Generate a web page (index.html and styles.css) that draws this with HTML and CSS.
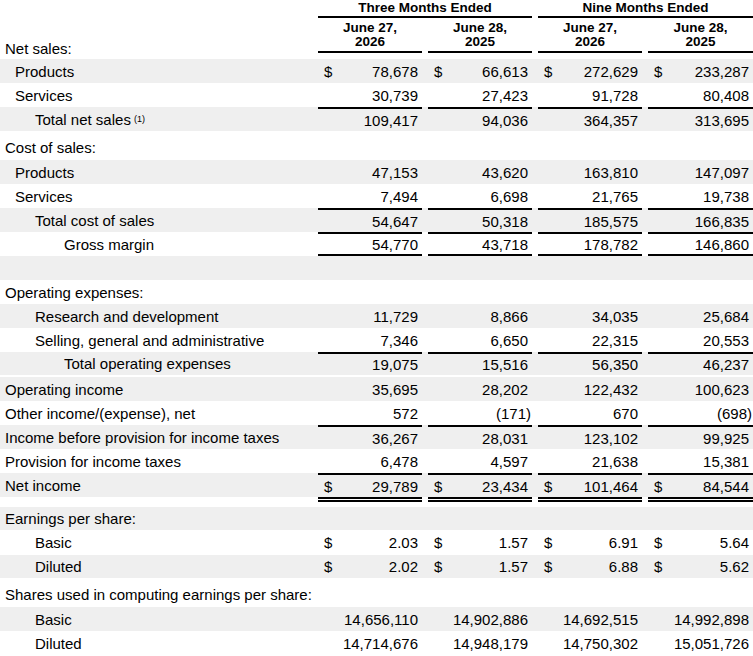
FILE: index.html
```html
<!DOCTYPE html>
<html lang="en">
<head>
    <meta charset="UTF-8">
    <meta name="viewport" content="width=device-width, initial-scale=1.0">
    <title>Condensed Consolidated Statements of Operations</title>
    <link rel="stylesheet" href="styles.css">
</head>
<body>
    <div class="statement">
        <div class="head-groups">
            <div></div>
            <div class="group">Three Months Ended</div>
            <div class="group">Nine Months Ended</div>
        </div>
        <div class="head-dates">
            <div class="label">Net sales:</div>
            <div class="date">June 27,<br>2026</div>
            <div class="date">June 28,<br>2025</div>
            <div class="date">June 27,<br>2026</div>
            <div class="date">June 28,<br>2025</div>
        </div>

        <div class="row shade">
            <div class="label lvl1">Products</div>
            <div class="num"><span class="cur">$</span>78,678</div>
            <div class="num"><span class="cur">$</span>66,613</div>
            <div class="num"><span class="cur">$</span>272,629</div>
            <div class="num"><span class="cur">$</span>233,287</div>
        </div>
        <div class="row">
            <div class="label lvl1">Services</div>
            <div class="num">30,739</div>
            <div class="num">27,423</div>
            <div class="num">91,728</div>
            <div class="num">80,408</div>
        </div>
        <div class="row shade total">
            <div class="label lvl2">Total net sales <sup class="note">(1)</sup></div>
            <div class="num">109,417</div>
            <div class="num">94,036</div>
            <div class="num">364,357</div>
            <div class="num">313,695</div>
        </div>
        <div class="row heading">
            <div class="label">Cost of sales:</div>
            <div></div><div></div><div></div><div></div>
        </div>
        <div class="row shade">
            <div class="label lvl1">Products</div>
            <div class="num">47,153</div>
            <div class="num">43,620</div>
            <div class="num">163,810</div>
            <div class="num">147,097</div>
        </div>
        <div class="row">
            <div class="label lvl1">Services</div>
            <div class="num">7,494</div>
            <div class="num">6,698</div>
            <div class="num">21,765</div>
            <div class="num">19,738</div>
        </div>
        <div class="row shade total">
            <div class="label lvl2">Total cost of sales</div>
            <div class="num">54,647</div>
            <div class="num">50,318</div>
            <div class="num">185,575</div>
            <div class="num">166,835</div>
        </div>
        <div class="row total under">
            <div class="label lvl3">Gross margin</div>
            <div class="num">54,770</div>
            <div class="num">43,718</div>
            <div class="num">178,782</div>
            <div class="num">146,860</div>
        </div>
        <div class="row shade">
            <div></div><div></div><div></div><div></div><div></div>
        </div>

        <div class="row">
            <div class="label">Operating expenses:</div>
            <div></div><div></div><div></div><div></div>
        </div>
        <div class="row shade">
            <div class="label lvl2">Research and development</div>
            <div class="num">11,729</div>
            <div class="num">8,866</div>
            <div class="num">34,035</div>
            <div class="num">25,684</div>
        </div>
        <div class="row">
            <div class="label lvl2">Selling, general and administrative</div>
            <div class="num">7,346</div>
            <div class="num">6,650</div>
            <div class="num">22,315</div>
            <div class="num">20,553</div>
        </div>
        <div class="row shade total tight">
            <div class="label lvl3">Total operating expenses</div>
            <div class="num">19,075</div>
            <div class="num">15,516</div>
            <div class="num">56,350</div>
            <div class="num">46,237</div>
        </div>
        <div class="gap"></div>

        <div class="row shade">
            <div class="label">Operating income</div>
            <div class="num">35,695</div>
            <div class="num">28,202</div>
            <div class="num">122,432</div>
            <div class="num">100,623</div>
        </div>
        <div class="row">
            <div class="label">Other income/(expense), net</div>
            <div class="num">572</div>
            <div class="num"><span class="neg">(171)</span></div>
            <div class="num">670</div>
            <div class="num"><span class="neg">(698)</span></div>
        </div>
        <div class="row shade total">
            <div class="label">Income before provision for income taxes</div>
            <div class="num">36,267</div>
            <div class="num">28,031</div>
            <div class="num">123,102</div>
            <div class="num">99,925</div>
        </div>
        <div class="row">
            <div class="label">Provision for income taxes</div>
            <div class="num">6,478</div>
            <div class="num">4,597</div>
            <div class="num">21,638</div>
            <div class="num">15,381</div>
        </div>
        <div class="row shade total">
            <div class="label">Net income</div>
            <div class="num"><span class="cur">$</span>29,789</div>
            <div class="num"><span class="cur">$</span>23,434</div>
            <div class="num"><span class="cur">$</span>101,464</div>
            <div class="num"><span class="cur">$</span>84,544</div>
        </div>
        <div class="row double">
            <div></div><div class="num"></div><div class="num"></div><div class="num"></div><div class="num"></div>
        </div>

        <div class="row shade tight">
            <div class="label">Earnings per share:</div>
            <div></div><div></div><div></div><div></div>
        </div>
        <div class="row loose">
            <div class="label lvl2">Basic</div>
            <div class="num"><span class="cur">$</span>2.03</div>
            <div class="num"><span class="cur">$</span>1.57</div>
            <div class="num"><span class="cur">$</span>6.91</div>
            <div class="num"><span class="cur">$</span>5.64</div>
        </div>
        <div class="row shade tight">
            <div class="label lvl2">Diluted</div>
            <div class="num"><span class="cur">$</span>2.02</div>
            <div class="num"><span class="cur">$</span>1.57</div>
            <div class="num"><span class="cur">$</span>6.88</div>
            <div class="num"><span class="cur">$</span>5.62</div>
        </div>
        <div class="row heading">
            <div class="label">Shares used in computing earnings per share:</div>
            <div></div><div></div><div></div><div></div>
        </div>
        <div class="row shade">
            <div class="label lvl2">Basic</div>
            <div class="num">14,656,110</div>
            <div class="num">14,902,886</div>
            <div class="num">14,692,515</div>
            <div class="num">14,992,898</div>
        </div>
        <div class="row">
            <div class="label lvl2">Diluted</div>
            <div class="num">14,714,676</div>
            <div class="num">14,948,179</div>
            <div class="num">14,750,302</div>
            <div class="num">15,051,726</div>
        </div>
    </div>
</body>
</html>
```

FILE: styles.css
```css
body {
    margin: 0;
    font-family: "Liberation Sans", Arial, sans-serif;
    font-size: 15px;
    color: #000;
    background-color: #fff;
}

.statement {
    width: 753px;
}

/* En-tetes */
.head-groups {
    display: grid;
    grid-template-columns: 312px 214px 215px;
    column-gap: 6px;
}

.group {
    font-weight: bold;
    font-size: 13.5px;
    line-height: 15px;
    text-align: center;
    padding-bottom: 1px;
    border-bottom: 2px solid #000;
}

.head-dates {
    display: grid;
    grid-template-columns: 312px 104px 104px 104px 105px;
    column-gap: 6px;
    height: 41px;
}

.date {
    align-self: start;
    font-weight: bold;
    font-size: 13.5px;
    line-height: 14px;
    text-align: center;
    padding: 3px 0 2px;
    border-bottom: 2px solid #000;
}

.head-dates .label {
    align-self: end;
    padding-bottom: 2px;
    line-height: 17px;
}

/* Lignes */
.row {
    display: grid;
    grid-template-columns: 312px 104px 104px 104px 105px;
    column-gap: 6px;
    height: 24px;
    line-height: 17px;
}

.row > div {
    display: flex;
    align-items: center;
}

.row.tight {
    height: 23px;
}

.row.loose {
    height: 25px;
}

.row.heading {
    height: 29px;
}

.row.heading > div {
    align-items: flex-end;
    padding-bottom: 4px;
}

.row.double {
    height: 10px;
}

.gap {
    height: 2px;
}

.shade {
    background-color: #efefef;
}

.label {
    padding-left: 5px;
    white-space: nowrap;
}

.label.lvl1 {
    padding-left: 15px;
}

.label.lvl2 {
    padding-left: 35px;
}

.label.lvl3 {
    padding-left: 64px;
}

.note {
    font-size: 9px;
    line-height: 0;
    vertical-align: 5px;
    margin-left: 3px;
}

.num {
    justify-content: flex-end;
    padding: 0 4px 0 6px;
}

.cur {
    margin-right: auto;
}

.neg {
    margin-right: -3px;
}

.total .num {
    border-top: 2px solid #000;
}

.under .num {
    border-bottom: 2px solid #000;
}

.double .num {
    align-self: start;
    height: 5px;
    border-top: 5px double #000;
}
```
